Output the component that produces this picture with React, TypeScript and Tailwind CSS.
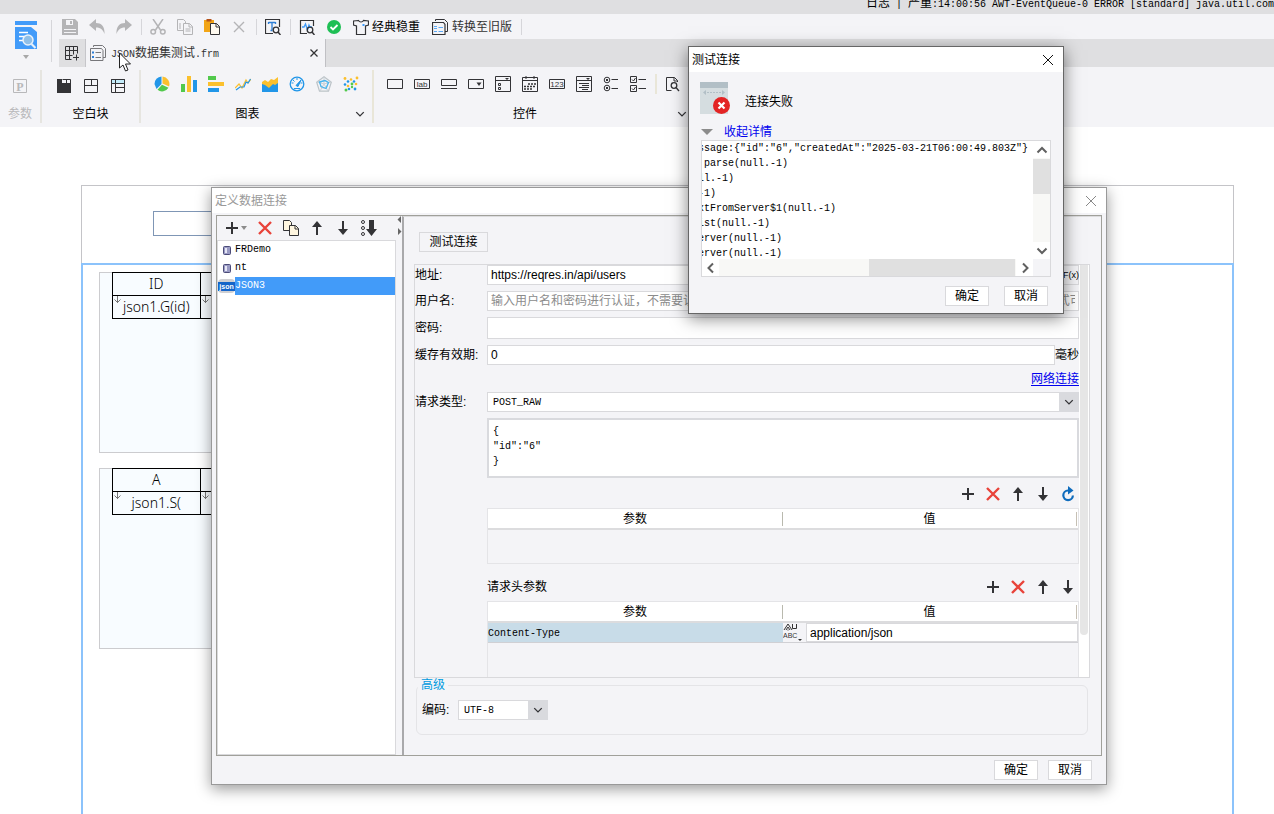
import React from 'react';

type Children = { children: React.ReactNode };

const Icon = ({ children, size = 'size-4' }: Children & { size?: string }) => (
  <svg viewBox="0 0 16 16" className={`${size} shrink-0`} fill="none" stroke="#333336" aria-hidden="true">
    {children}
  </svg>
);

const IconButton = ({ label, children }: Children & { label: string }) => (
  <button type="button" aria-label={label} className="block shrink-0">
    {children}
  </button>
);

const Mono = ({ children }: Children) => (
  <span className="font-[family-name:'Liberation_Mono',monospace] text-[10px]">{children}</span>
);

const Divider = () => <span className="ml-[9px] mr-2 h-4 w-px bg-[#d6d6da]" />;

const Chevron = () => (
  <Icon size="size-3">
    <path d="M3 5.500l5 5 5-5" strokeWidth="1.800" />
  </Icon>
);

const Plus = () => (
  <Icon>
    <path d="M8 2v12M2 8h12" strokeWidth="2" />
  </Icon>
);

const Remove = () => (
  <Icon>
    <path d="M2 2l12 12M14 2L2 14" stroke="#e8433a" strokeWidth="2.400" />
  </Icon>
);

const Up = () => (
  <Icon>
    <path d="M8 5v10" strokeWidth="2" />
    <path d="M8 1L3 7h10z" fill="#333336" stroke="none" />
  </Icon>
);

const Down = () => (
  <Icon>
    <path d="M8 1v10" strokeWidth="2" />
    <path d="M8 15L3 9h10z" fill="#333336" stroke="none" />
  </Icon>
);

const Refresh = () => (
  <Icon>
    <path d="M9.500 4.500H8a4.800 4.800 0 1 0 4.900 5" stroke="#0f6cbd" strokeWidth="2.200" />
    <path d="M8 0l5.500 4.500L8 8.500z" fill="#0f6cbd" stroke="none" />
  </Icon>
);

const Pages = () => (
  <Icon>
    <path d="M.5.5h6l2 2v8h-8z" fill="#fff6e0" />
    <path d="M6.500 5.500h6l3 3v7h-9z" fill="#fff6e0" />
    <path d="M12 5.500v3.500h3.500" />
  </Icon>
);

const editIcons = [
  {
    label: '保存',
    icon: (
      <Icon>
        <path d="M0 0h13l3 3v13H0z" fill="#b4b4b6" stroke="none" />
        <path d="M4 1h7v5H4zM2 10h12v1H2zM2 13h12v1H2z" fill="#f4f4f7" stroke="none" />
        <path d="M8 2h2v3H8z" fill="#b4b4b6" stroke="none" />
      </Icon>
    ),
  },
  {
    label: '撤销',
    icon: (
      <Icon>
        <path d="M0 6l7-6v4c5 0 9 3 8.500 11C14 11 12 8.500 7 8.500V12z" fill="#b4b4b6" stroke="none" />
      </Icon>
    ),
  },
  {
    label: '重做',
    icon: (
      <Icon>
        <path d="M16 6L9 0v4C4 4 0 7 .5 15 2 11 4 8.500 9 8.500V12z" fill="#b4b4b6" stroke="none" />
      </Icon>
    ),
  },
];

const clipIcons = [
  {
    label: '剪切',
    icon: (
      <Icon>
        <g stroke="#b4b4b6" strokeWidth="1.500">
          <path d="M3 0l7.500 11M13 0L5.500 11" />
          <circle cx="3.200" cy="12.800" r="2.300" />
          <circle cx="12.800" cy="12.800" r="2.300" />
        </g>
      </Icon>
    ),
  },
  {
    label: '复制',
    icon: (
      <Icon>
        <g stroke="#b4b4b6">
          <path d="M.5.5h6l2 2v9h-8z" />
          <path d="M2 5h2M2 7h2M2 9h2" />
          <path d="M6.500 4.500h6l3 3v8h-9z" fill="#f4f4f7" />
          <path d="M12 4.500V8h3.500M8.500 10h5M8.500 12h5" />
        </g>
      </Icon>
    ),
  },
  {
    label: '粘贴',
    icon: (
      <Icon>
        <path d="M0 1h10v12H0z" fill="#f2a516" stroke="none" />
        <path d="M2.500 0h5v2.500h-5z" fill="#b5531a" stroke="none" />
        <path d="M6.500 4.500h6l3 3v8h-9z" fill="#fffaf0" />
        <path d="M12 4.500V8h3.500" />
      </Icon>
    ),
  },
  {
    label: '删除',
    icon: (
      <Icon>
        <path d="M3 3l10 10M13 3L3 13" stroke="#b4b4b6" strokeWidth="1.400" />
      </Icon>
    ),
  },
];

const blockIcons = [
  {
    label: '报表块',
    icon: (
      <Icon>
        <path d="M1 1h5v4h9v10H1z" fill="#333336" stroke="none" />
        <path d="M6.500 1.500h8v4M10.500 1v4" />
      </Icon>
    ),
  },
  {
    label: 'Tab块',
    icon: (
      <Icon>
        <path d="M1.500 1.500h13v13h-13zM1.500 7.500h13M8.500 1.500v6" />
      </Icon>
    ),
  },
  {
    label: '绝对画布块',
    icon: (
      <Icon>
        <path d="M1.500 1.500h13v4h-13z" fill="#c4ecfa" />
        <path d="M1.500 1.500h13v13h-13zM5.500 1.500v13M5.500 9.500h9" />
      </Icon>
    ),
  },
];

const chartIcons = [
  {
    label: '饼图',
    icon: (
      <Icon>
        <g stroke="none">
          <path d="M8.500 7.500V.5a7.500 7.500 0 0 1 6.500 10z" fill="#fbc02d" />
          <path d="M7.500.5A7.500 7.500 0 0 0 .5 8l2 5 5-5z" fill="#2196e8" />
          <path d="M8 8.800l6.500 3a7.500 7.500 0 0 1-11 2z" fill="#52c94c" />
        </g>
      </Icon>
    ),
  },
  {
    label: '柱形图',
    icon: (
      <Icon>
        <g stroke="none">
          <path d="M0 8h4v8H0z" fill="#52c94c" />
          <path d="M6 0h4v16H6z" fill="#fbc02d" />
          <path d="M12 4h4v12h-4z" fill="#2196e8" />
        </g>
      </Icon>
    ),
  },
  {
    label: '条形图',
    icon: (
      <Icon>
        <g stroke="none">
          <path d="M0 0h8v4H0z" fill="#52c94c" />
          <path d="M0 6h16v4H0z" fill="#fbc02d" />
          <path d="M0 12h11v4H0z" fill="#2196e8" />
        </g>
      </Icon>
    ),
  },
  {
    label: '折线图',
    icon: (
      <Icon>
        <path d="M0 12l4-4 3 4 4-8 2 3 3-4" stroke="#fbc02d" strokeWidth="1.200" />
        <path d="M1 14l4-3 4 0 2-5 2 1 2.500-4" stroke="#2196e8" strokeWidth="1.200" />
      </Icon>
    ),
  },
  {
    label: '面积图',
    icon: (
      <Icon>
        <path d="M0 6l3-2 3 2 3-3 3 1 4-3v11H0z" fill="#fbc02d" stroke="none" />
        <path d="M0 8l3 1 4 3 4-4 2 1 3-2v9H0z" fill="#2196e8" stroke="none" />
      </Icon>
    ),
  },
  {
    label: '仪表盘',
    icon: (
      <Icon>
        <circle cx="8" cy="8" r="6.800" stroke="#2196e8" strokeWidth="1.300" />
        <path d="M8 2v2M2.500 7h2M11.500 7h2M4 4l1.500 1.500M5 12.500h6" stroke="#2196e8" />
        <path d="M7 9.500L12 4l-3 6.500z" fill="#2196e8" stroke="#2196e8" />
      </Icon>
    ),
  },
  {
    label: '雷达图',
    icon: (
      <Icon>
        <path d="M8 .8l7.300 5.400-2.800 9h-9L.7 6.200z" stroke="#bcc3c8" strokeWidth="1.200" />
        <path d="M8 4l4 3-1.500 5h-5L4 7zM8 1v7M1 6l7 2 7-2M4 15l4-7 4 7" stroke="#c9d0d5" />
        <path d="M3.500 6L9 4.500l3.500 2L10 12.500l-5-2z" stroke="#48b5ef" strokeWidth="1.300" />
      </Icon>
    ),
  },
  {
    label: '散点图',
    icon: (
      <Icon>
        <g stroke="none" fill="#fbc02d">
          <circle cx="2" cy="2.500" r="1.400" />
          <circle cx="8" cy="3.500" r="1.300" />
          <circle cx="14" cy="2" r="1.400" />
          <circle cx="5" cy="10" r="1.300" />
          <circle cx="13" cy="8" r="1.300" />
        </g>
        <g stroke="none" fill="#2196e8">
          <circle cx="5" cy="5.500" r="1.300" />
          <circle cx="2" cy="8.500" r="1.300" />
          <circle cx="11" cy="5.500" r="1.300" />
          <circle cx="6" cy="13" r="1.300" />
          <circle cx="12" cy="13" r="1.400" />
        </g>
        <g stroke="none" fill="#52c94c">
          <circle cx="9" cy="8" r="1.400" />
          <circle cx="3" cy="14" r="1.500" />
          <circle cx="9" cy="11" r="1.200" />
        </g>
      </Icon>
    ),
  },
];

const widgetIcons = [
  { label: '文本控件', icon: <Icon><path d="M.5 3.500h15v9H.5z" /></Icon> },
  {
    label: '标签控件',
    icon: (
      <Icon>
        <path d="M.5 3.500h15v9H.5z" />
        <text x="8" y="11" fontSize="8" textAnchor="middle" fill="#333336" stroke="none" fontFamily="Liberation Sans, sans-serif">lab</text>
      </Icon>
    ),
  },
  { label: '按钮控件', icon: <Icon><path d="M.5 3.500h15v6H.5zM0 12.500h16" /></Icon> },
  {
    label: '下拉框控件',
    icon: (
      <Icon>
        <path d="M.5 3.500h15v9H.5z" />
        <path d="M8.500 6.500h5L11 10z" fill="#333336" stroke="none" />
      </Icon>
    ),
  },
  {
    label: '下拉复选框控件',
    icon: (
      <Icon>
        <path d="M.5.5h15v15H.5zM.5 4.500h15M3.500 7.500h2v2h-2zM3.500 11.500h2v2h-2z" />
        <path d="M10 2h4l-2 2z" fill="#333336" stroke="none" />
      </Icon>
    ),
  },
  {
    label: '日期控件',
    icon: (
      <Icon>
        <path d="M.5 1.500h15v14H.5zM.5 4.500h15M4 0v3M12 0v3" />
        <path d="M6 8h8M2 10.500h12M2 13h9" strokeWidth="1.600" strokeDasharray="2 1" />
      </Icon>
    ),
  },
  {
    label: '数字控件',
    icon: (
      <Icon>
        <path d="M.5 3.500h15v9H.5z" />
        <text x="8" y="11" fontSize="8" textAnchor="middle" fill="#333336" stroke="none" fontFamily="Liberation Sans, sans-serif">123</text>
      </Icon>
    ),
  },
  {
    label: '文本域控件',
    icon: (
      <Icon>
        <path d="M.5.5h15v15H.5zM.5 4.500h15M3 7.500h10M6 9.500h7M3 11.500h10M6 13.500h6" />
        <path d="M10 2h4l-2 2z" fill="#333336" stroke="none" />
      </Icon>
    ),
  },
  {
    label: '单选按钮组控件',
    icon: (
      <Icon>
        <circle cx="4" cy="4" r="2.800" />
        <circle cx="4" cy="12" r="2.800" />
        <path d="M3 4h2M3 12h2" strokeWidth="2" />
        <path d="M8.500 3.500H15M8.500 12.500H15" />
      </Icon>
    ),
  },
  {
    label: '复选框组控件',
    icon: (
      <Icon>
        <path d="M.5.5h6v6h-6zM.5 9.500h6v6h-6zM8.500 3.500H16M8.500 12.500H16" />
        <path d="M2 3.500l1.500 1.500L5.500 2M2 12.500L3.500 14l2-3" />
      </Icon>
    ),
  },
];

const stackTrace = [
  'ssage:{"id":"6","createdAt":"2025-03-21T06:00:49.803Z"}',
  ' parse(null.-1)',
  'll.-1)',
  '-1)',
  'xtFromServer$1(null.-1)',
  'ist(null.-1)',
  'erver(null.-1)',
  'erver(null.-1)',
];

const IconRow = ({ items }: { items: { label: string; icon: React.ReactNode }[] }) => (
  <div className="flex items-center gap-[11px]">
    {items.map(({ label, icon }) => (
      <IconButton key={label} label={label}>
        {icon}
      </IconButton>
    ))}
  </div>
);

const Toolbar = () => (
  <div className="flex h-[25px] items-center pl-[3px]">
    <IconRow items={editIcons} />
    <Divider />
    <IconRow items={clipIcons} />
    <Divider />
    <IconButton label="查找">
      <Icon>
        <path d="M14.500 8V.5H.5v14H8" strokeWidth="1.200" />
        <path d="M3.500 3.500h7M7 3v8M5.500 11.500h2M3.500 3v2M10.500 3v2" stroke="#2f7fd6" strokeWidth="1.300" />
        <circle cx="11" cy="11" r="2.800" strokeWidth="1.300" />
        <path d="M13 13l2.500 3" strokeWidth="1.500" />
      </Icon>
    </IconButton>
    <Divider />
    <div className="flex items-center gap-[11px]">
      <IconButton label="性能分析">
        <Icon>
          <path d="M14.500 7V1.500H1.500v13H8" strokeWidth="1.200" />
          <path d="M3 8h2l1.500-3 2 6 1.500-5 1 2h2" stroke="#3f9bfa" strokeWidth="1.300" />
          <circle cx="11" cy="11" r="2.800" strokeWidth="1.300" />
          <path d="M13 13l2.500 3" strokeWidth="1.500" />
        </Icon>
      </IconButton>
      <IconButton label="检测">
        <Icon>
          <circle cx="8" cy="8" r="7" fill="#1fbf55" stroke="none" />
          <path d="M4.500 8l2.500 2.500 4.500-4.500" stroke="#fff" strokeWidth="1.800" />
        </Icon>
      </IconButton>
      <button type="button" className="flex items-center gap-[3px]">
        <Icon>
          <path d="M5.500 1.500L.5 2v4l3 1v8.500h9V7l3-1V2l-5-.5c-1 2-4 2-5 0z" strokeWidth="1.200" />
          <path d="M9.500 5h2v2h-2z" fill="#3f9bfa" stroke="none" />
        </Icon>
        经典稳重
      </button>
    </div>
    <button type="button" className="ml-3 flex items-center gap-1 text-[#333]">
      <Icon>
        <path d="M3.500 2V.5h9l3 3v9H13" />
        <path d="M.5 3.500h11l1.500 2v10H.5z" strokeWidth="1.200" />
        <path d="M2 7.500h3M2 9.500h3M2 12.500h3M6.500 8.500H11M6.500 12.500H11" stroke="#5ba8f5" />
      </Icon>
      转换至旧版
    </button>
    <Divider />
  </div>
);

const TabStrip = () => (
  <div className="flex h-7 bg-[#dfdfe1]">
    <button type="button" aria-label="新建" className="flex w-[27px] items-center justify-center border-r border-[#c6c6ca]">
      <Icon>
        <path d="M1.500 1.500h12M1.500 5.500h12M1.500 10.500h7M1.500 1.500v13M5.500 1.500v13M9.500 1.500v8M13.500 1.500v7M1.500 14.500h6M9 12.500h6M12.500 9.500v6" />
      </Icon>
    </button>
    <div className="flex w-60 items-center border-r border-[#c0c0c4] bg-[#f4f4f7] pl-1 pr-[3px]">
      <Icon>
        <path d="M3.500 2V.5h9l3 3v9H13M.5 3.500h11l1.500 2v10H.5z" stroke="#77777a" />
        <path d="M2 6.500h2v2H2zM2 11h2v2H2z" fill="#2f7fd6" stroke="none" />
        <path d="M5.500 7.500H11M5.500 12.500H11" stroke="#77777a" />
      </Icon>
      <span className="ml-[5px] flex-1 whitespace-nowrap text-[#333]">
        <Mono>JSON</Mono>数据集测试<Mono>.frm</Mono>
      </span>
      <IconButton label="关闭标签">
        <Icon>
          <path d="M4.500 4.500l7 7M11.500 4.500l-7 7" strokeWidth="1.300" />
        </Icon>
      </IconButton>
    </div>
  </div>
);

const Ribbon = () => (
  <div className="flex h-[60px] shrink-0 bg-[#f4f4f7] pb-1 pt-[3px]">
    <section className="flex w-[42px] shrink-0 flex-col items-center border-r-2 border-[#e6e5e0] text-[#b8b8ba]">
      <div className="flex h-7 items-center pt-1">
        <Icon>
          <path d="M1.500 1.500h13v13h-13z" stroke="#b8b8ba" />
          <text x="8" y="12.500" fontSize="12" fontWeight="700" textAnchor="middle" fill="#b8b8ba" stroke="none" fontFamily="Liberation Serif, serif">P</text>
        </Icon>
      </div>
      <h2 className="pt-2">参数</h2>
    </section>
    <section className="flex w-[99px] shrink-0 flex-col items-center border-r-2 border-[#e6e5e0]">
      <div className="flex h-7 items-center pt-1">
        <IconRow items={blockIcons} />
      </div>
      <h2 className="pt-2">空白块</h2>
    </section>
    <section className="flex w-[233px] shrink-0 flex-col border-r-2 border-[#e9e6d8]">
      <div className="flex h-7 items-center pl-[13px]">
        <IconRow items={chartIcons} />
      </div>
      <div className="flex items-center pr-[6px] pt-2">
        <h2 className="flex-1 text-center">图表</h2>
        <IconButton label="更多图表"><Chevron /></IconButton>
      </div>
    </section>
    <section className="flex w-[314px] shrink-0 flex-col">
      <div className="flex h-7 items-center pl-[13px]">
        <IconRow items={widgetIcons} />
        <span className="ml-[9px] mr-2 h-5 w-[2px] shrink-0 bg-[#e9e6d8]" />
        <IconButton label="预览控件">
          <Icon>
            <path d="M12.500 6V4.500l-3-3h-8v13h5M9 1.500V5h3.500" />
            <circle cx="9" cy="9.500" r="2.800" strokeWidth="1.300" />
            <path d="M11 11.500l3 3.500" strokeWidth="1.300" />
          </Icon>
        </IconButton>
      </div>
      <div className="flex items-center pt-2">
        <h2 className="flex-1 text-center">控件</h2>
        <IconButton label="更多控件"><Chevron /></IconButton>
      </div>
    </section>
  </div>
);

const Expand = () => (
  <svg viewBox="0 0 8 10" className="absolute left-0 top-0 h-[10px] w-2" fill="none" stroke="#777" aria-hidden="true">
    <path d="M4.500 0v7M1.500 3.500l3 3 3-3" />
  </svg>
);

const ReportBlock = ({ head, value }: { head: string; value: string }) => (
  <div className="h-[181px] w-[360px] border border-[#cccccf] bg-[#f8fcff] pl-3">
    <table className="-mt-px w-44 table-fixed border-collapse font-[family-name:'Noto_Sans',sans-serif] text-sm font-light">
      <tbody>
        <tr className="h-[23px]">
          <td className="border border-black p-0 text-center leading-5">{head}</td>
          <td className="border border-black p-0" />
        </tr>
        <tr className="h-[23px]">
          <td className="relative border border-black p-0 text-center leading-5"><Expand />{value}</td>
          <td className="relative border border-black p-0"><Expand /></td>
        </tr>
      </tbody>
    </table>
  </div>
);

const DialogButton = ({ children }: Children) => (
  <button type="button" className="h-5 w-11 border border-[#d9d9dc] bg-white leading-[18px]">
    {children}
  </button>
);

const SelectBox = ({ id, value, className }: { id: string; value: string; className: string }) => (
  <div className={`relative h-5 ${className}`}>
    <select
      id={id}
      defaultValue={value}
      className="block size-full appearance-none border border-[#d9d9dc] bg-white pl-[5px] pt-px font-[family-name:'Liberation_Mono',monospace] text-[10px]"
    >
      <option>{value}</option>
    </select>
    <span className="pointer-events-none absolute inset-y-0 right-0 flex w-5 items-center justify-center bg-[#d9dade]">
      <Chevron />
    </span>
  </div>
);

const inputClass =
  "block w-full min-w-0 border border-[#d9d9dc] bg-white px-[3px] font-[family-name:'Liberation_Sans','Noto_Sans_CJK_SC',sans-serif] text-xs placeholder:text-[#8c8c8c]";

const ParamTable = ({ children, bodyHeight }: { children?: React.ReactNode; bodyHeight: string }) => (
  <div className={`border border-[#e4e4e7] ${bodyHeight}`}>
    <table className="w-full table-fixed border-collapse">
      <thead>
        <tr className="h-5 border-b-2 border-[#dcdcde] bg-white">
          <th className="p-0 font-normal">
            <div className="border-r border-[#b9b9ae] leading-[14px]">参数</div>
          </th>
          <th className="p-0 font-normal">
            <div className="mr-px border-r border-[#c6c0b4] leading-[14px]">值</div>
          </th>
        </tr>
      </thead>
      <tbody>{children}</tbody>
    </table>
  </div>
);

const Database = () => (
  <svg viewBox="0 0 8 9" className="ml-[5px] mr-1 h-[9px] w-2" aria-hidden="true">
    <rect x=".5" y=".5" width="7" height="8" rx="1" fill="#9a9bc4" stroke="#4b4b78" />
    <path d="M2 2h2v5H2z" fill="#e6e6f5" />
  </svg>
);

const ConnectionList = () => (
  <div className="flex w-[179px] shrink-0 flex-col">
    <div className="flex h-6 shrink-0 items-center gap-[10px] pl-[7px]">
      <button type="button" aria-label="新增连接" className="flex items-center gap-px">
        <Plus />
        <svg viewBox="0 0 6 4" className="h-1 w-[6px]" aria-hidden="true"><path d="M0 0h6L3 4z" fill="#8c8c8c" /></svg>
      </button>
      <IconButton label="删除连接"><Remove /></IconButton>
      <IconButton label="复制连接"><Pages /></IconButton>
      <IconButton label="上移"><Up /></IconButton>
      <IconButton label="下移"><Down /></IconButton>
      <IconButton label="排序">
        <Icon>
          <circle cx="2" cy="2" r="1.500" />
          <circle cx="2" cy="8" r="1.500" />
          <circle cx="2" cy="14" r="1.500" />
          <path d="M8 0h5v9h3l-5.500 7L5 9h3z" fill="#333336" stroke="none" />
        </Icon>
      </IconButton>
    </div>
    <ul className="flex-1 border border-[#d9d9dc] bg-white font-[family-name:'Liberation_Mono',monospace] text-[10px] leading-[18px]">
      <li className="flex items-center"><Database />FRDemo</li>
      <li className="flex items-center"><Database />nt</li>
      <li className="flex items-center">
        <span className="flex h-[14px] w-[17px] items-center rounded-sm bg-[#cfcfd2]">
          <span className="w-full bg-[#1565c8] text-center font-[family-name:'Liberation_Sans',sans-serif] text-[7px] font-bold leading-[9px] text-white">
            json
          </span>
        </span>
        <span className="flex-1 bg-[#429bf9] text-white">JSON3</span>
      </li>
    </ul>
  </div>
);

const ConnectionForm = () => (
  <form className="flex min-w-0 flex-1 flex-col border-l-2 border-t border-[#a9a9ab] border-t-[#dcdcde] pl-[10px] pr-[11px] pt-[15px]">
    <div className="pl-[5px]">
      <button type="button" className="h-5 w-[69px] border border-[#d9d9dc] leading-[18px]">测试连接</button>
    </div>
    <div className="mt-3 flex h-[414px] overflow-hidden border border-[#d9d9dc]">
      <div className="min-w-0 flex-1">
        <div className="grid grid-cols-[72px_minmax(0,1fr)] items-center gap-y-[6px]">
          <label htmlFor="url">地址:</label>
          <div className="flex">
            <input id="url" className={`${inputClass} h-5`} defaultValue="https://reqres.in/api/users" />
            <button type="button" className="h-5 w-[17px] shrink-0 border border-[#d9d9dc] font-[family-name:'Liberation_Sans',sans-serif] text-[9px] leading-4">
              F(x)
            </button>
          </div>
          <label htmlFor="user">用户名:</label>
          <input id="user" className={`${inputClass} h-5`} placeholder="输入用户名和密码进行认证，不需要认证则可以直接为空，支持参数和公式，参数可为${参数名}的形式，公式可为=公式的形式；例如 ${user} 或 =user 的两种形式" />
          <label htmlFor="password">密码:</label>
          <input id="password" type="password" className={`${inputClass} h-[22px]`} />
          <label htmlFor="cache">缓存有效期:</label>
          <div className="flex items-center">
            <input id="cache" className={`${inputClass} h-5`} defaultValue="0" />
            <span className="w-6 shrink-0 whitespace-nowrap">毫秒</span>
          </div>
        </div>
        <div className="flex h-[27px] items-center justify-end">
          <a href="#network" className="text-[#0000ee] underline underline-offset-2">网络连接</a>
        </div>
        <div className="grid grid-cols-[72px_minmax(0,1fr)] items-center gap-y-[6px]">
          <label htmlFor="method">请求类型:</label>
          <SelectBox id="method" value="POST_RAW" className="w-full" />
          <textarea
            aria-label="请求体"
            className="col-start-2 block h-[60px] w-full resize-none border-2 border-[#d9dade] bg-white px-1 py-1 font-[family-name:'Liberation_Mono',monospace] text-[10px] leading-[15px]"
            defaultValue={'{\n"id":"6"\n}'}
          />
        </div>
        <div className="pl-[72px]">
          <div className="flex h-[30px] items-center justify-end gap-[9px] pr-[3px] pt-[2px]">
            <IconButton label="新增参数"><Plus /></IconButton>
            <IconButton label="删除参数"><Remove /></IconButton>
            <IconButton label="上移参数"><Up /></IconButton>
            <IconButton label="下移参数"><Down /></IconButton>
            <IconButton label="刷新参数"><Refresh /></IconButton>
          </div>
          <ParamTable bodyHeight="h-14" />
          <div className="flex h-[37px] items-center justify-end gap-[9px] pr-[3px] pt-2">
            <h3 className="flex-1">请求头参数</h3>
            <IconButton label="新增请求头"><Plus /></IconButton>
            <IconButton label="删除请求头"><Remove /></IconButton>
            <IconButton label="上移请求头"><Up /></IconButton>
            <IconButton label="下移请求头"><Down /></IconButton>
          </div>
          <ParamTable bodyHeight="h-20">
            <tr className="h-5 border-b border-[#d0d0d4]">
              <td className="bg-[#c8dce8] p-0 leading-4"><Mono>Content-Type</Mono></td>
              <td className="p-0">
                <div className="flex">
                  <button type="button" aria-label="值类型" className="w-[23px] shrink-0">
                    <svg viewBox="0 0 22 19" className="h-[19px] w-[22px]" fill="none" stroke="#333" aria-hidden="true">
                      <path d="M1 7l4-6 4 6M3 7l2-3 2 3M4.500 7h1M9.500 1v4.500h4V1" />
                      <text x="0" y="15" fontSize="7" fill="#333" stroke="none" fontFamily="Liberation Sans, sans-serif">ABC</text>
                      <path d="M15 16h4l-2 2z" fill="#333" stroke="none" />
                    </svg>
                  </button>
                  <input aria-label="值" className={`${inputClass} h-[19px]`} defaultValue="application/json" />
                </div>
              </td>
            </tr>
          </ParamTable>
        </div>
      </div>
      <div className="w-[10px] shrink-0 bg-white px-px">
        <div className="h-[370px] rounded-b-sm bg-[#e6e6e6]" />
      </div>
    </div>
    <fieldset className="mx-[2px] h-[57px] rounded-md border border-[#e4e4e7] px-[5px]">
      <legend className="-ml-1 px-[3px] leading-[14px] text-[#009bdf]">高级</legend>
      <div className="mt-2 flex items-center">
        <label htmlFor="encoding" className="w-9">编码:</label>
        <SelectBox id="encoding" value="UTF-8" className="w-[90px]" />
      </div>
    </fieldset>
  </form>
);

const ConnectionDialog = () => (
  <div
    role="dialog"
    aria-label="定义数据连接"
    className="absolute left-[211px] top-[187px] flex h-[598px] w-[896px] flex-col border border-[#999] bg-[#f4f4f7] shadow-[0_4px_14px_rgba(0,0,0,0.4)]"
  >
    <header className="flex h-[25px] shrink-0 items-center justify-between bg-white pl-[3px] pr-[7px] text-[#999]">
      <h2>定义数据连接</h2>
      <IconButton label="关闭">
        <Icon><path d="M3 3l10 10M13 3L3 13" stroke="#888" /></Icon>
      </IconButton>
    </header>
    <div className="mx-1 mt-[2px] flex h-[541px] border border-[#a0a09a]">
      <ConnectionList />
      <div className="w-[6px] shrink-0">
        <svg viewBox="0 0 6 20" className="h-5 w-[6px]" fill="#666" aria-hidden="true">
          <path d="M5 0v7L1.500 3.500zM2 12v7l3.500-3.500z" />
        </svg>
      </div>
      <ConnectionForm />
    </div>
    <footer className="flex justify-end gap-[10px] pr-[14px] pt-1">
      <DialogButton>确定</DialogButton>
      <DialogButton>取消</DialogButton>
    </footer>
  </div>
);

const arrowPaths = {
  up: 'M3.500 10.500L8 6l4.500 4.500',
  down: 'M3.500 5.500L8 10l4.500-4.500',
  left: 'M10 3.500L5.500 8l4.500 4.500',
  right: 'M6 3.500L10.500 8 6 12.500',
};

const ScrollArrow = ({ direction, label }: { direction: keyof typeof arrowPaths; label: string }) => (
  <button type="button" aria-label={label} className="flex size-[17px] shrink-0 items-center justify-center bg-white">
    <Icon><path d={arrowPaths[direction]} stroke="#606060" strokeWidth="2" /></Icon>
  </button>
);

const ResultDialog = () => (
  <div
    role="dialog"
    aria-label="测试连接"
    className="absolute left-[688px] top-[46px] flex h-[268px] w-[376px] flex-col border border-[#666] bg-[#f4f4f7] shadow-[0_4px_16px_rgba(0,0,0,0.5)]"
  >
    <header className="flex h-[25px] shrink-0 items-center justify-between bg-white pl-[3px] pr-[7px]">
      <h2>测试连接</h2>
      <IconButton label="关闭">
        <Icon><path d="M3 3l10 10M13 3L3 13" stroke="#111" /></Icon>
      </IconButton>
    </header>
    <div className="flex items-center pl-[11px] pt-[10px]">
      <svg viewBox="0 0 30 32" className="h-8 w-[30px]" aria-hidden="true">
        <path d="M0 0h28v32H0z" fill="#d5dde0" />
        <path d="M0 0h28v6H0z" fill="#b2bfc6" />
        <path d="M3 10.500l3-2.500v5zM25 10.500L22 8v5z" fill="#b2bfc6" />
        <path d="M7 10.500h14" stroke="#b2bfc6" strokeDasharray="2 1" />
        <circle cx="21.500" cy="23.500" r="8.500" fill="#e32424" />
        <path d="M18.500 20.500l6 6M24.500 20.500l-6 6" stroke="#fff" strokeWidth="2.200" />
      </svg>
      <p className="ml-[15px] pt-2">连接失败</p>
    </div>
    <button type="button" className="mt-2 flex h-[18px] shrink-0 items-center gap-[11px] pl-3 pt-px text-[#0000ee]">
      <svg viewBox="0 0 12 6" className="h-[6px] w-3" aria-hidden="true"><path d="M0 0h12L6 6z" fill="#8c8c8c" /></svg>
      收起详情
    </button>
    <div className="mx-3 flex h-[137px] flex-col border border-[#d9d9dc]">
      <div className="flex h-[118px] shrink-0">
        <div className="min-w-0 flex-1 overflow-hidden bg-white">
          <pre className="-ml-1 font-[family-name:'Liberation_Mono',monospace] text-[10px] leading-[15px]">{stackTrace.join('\n')}</pre>
        </div>
        <div className="flex w-[17px] shrink-0 flex-col bg-[#f8f8f6]">
          <ScrollArrow direction="up" label="向上滚动" />
          <div className="mt-px h-[35px] bg-[#e0e0e0]" />
          <div className="flex-1" />
          <ScrollArrow direction="down" label="向下滚动" />
        </div>
      </div>
      <div className="flex h-[17px] pr-[17px]">
        <div className="flex flex-1 bg-[#f8f8f6]">
          <ScrollArrow direction="left" label="向左滚动" />
          <div className="flex-1" />
          <div className="mr-px w-[146px] bg-[#e0e0e0]" />
          <ScrollArrow direction="right" label="向右滚动" />
        </div>
      </div>
    </div>
    <footer className="flex justify-end gap-[15px] pr-[15px] pt-[9px]">
      <DialogButton>确定</DialogButton>
      <DialogButton>取消</DialogButton>
    </footer>
  </div>
);

const App = () => (
  <div className="relative flex h-screen flex-col overflow-hidden bg-white font-[family-name:'Liberation_Sans','Noto_Sans_CJK_SC',sans-serif] text-xs text-black">
    <div className="flex h-[14px] shrink-0 items-end justify-end overflow-hidden bg-[#dfdfe1]">
      <p className="w-[408px] whitespace-pre pb-px leading-4">
        日志<Mono>{' | '}</Mono>严重<Mono>:14:00:56 AWT-EventQueue-0 ERROR [standard] java.util.com</Mono>
      </p>
    </div>
    <div className="flex h-[53px] shrink-0 bg-[#f4f4f7]">
      <div className="flex w-[51px] shrink-0 flex-col items-center pt-[6px]">
        <svg viewBox="0 0 22 30" className="h-[30px] w-[22px]" aria-hidden="true">
          <path d="M0 1h22v4H0zM0 7h16l6 5v17H0z" fill="#429bf9" />
          <path d="M4 12.500h9M4 16.500h6M4 20.500h5" stroke="#fff" strokeWidth="1.500" />
          <circle cx="13" cy="20" r="5" fill="#8fbfe8" stroke="#e8f1fa" strokeWidth="1.500" />
          <path d="M16.500 24l4 4" stroke="#e8f1fa" strokeWidth="2.200" />
        </svg>
        <svg viewBox="0 0 6 4" className="mt-[5px] h-1 w-[6px]" aria-hidden="true"><path d="M0 0h6L3 4z" fill="#a8a8a8" /></svg>
      </div>
      <span className="mr-[7px] mt-[6px] h-[42px] w-px bg-[#d6d6da]" />
      <div className="min-w-0 flex-1">
        <Toolbar />
        <TabStrip />
      </div>
    </div>
    <Ribbon />
    <main className="ml-[81px] mr-10 mt-[58px] flex flex-1 flex-col">
      <div className="h-[78px] border border-b-0 border-[#c4c4c8] pl-[71px] pt-[25px]">
        <div className="h-[25px] w-72 border border-[#7f96b5]" />
      </div>
      <div className="flex flex-1 flex-col gap-[15px] border-2 border-b-0 border-[#8cc3fb] pl-4 pt-[7px]">
        <ReportBlock head="ID" value="json1.G(id)" />
        <ReportBlock head="A" value="json1.S(" />
      </div>
    </main>
    <ConnectionDialog />
    <ResultDialog />
    <svg viewBox="0 0 12 20" className="pointer-events-none absolute left-[119px] top-[52px] h-5 w-3" aria-hidden="true">
      <path d="M.5 1v15l3.500-3 2.500 6 2.500-1-2.500-6h5z" fill="#fff" stroke="#222" />
    </svg>
  </div>
);

export default App;
